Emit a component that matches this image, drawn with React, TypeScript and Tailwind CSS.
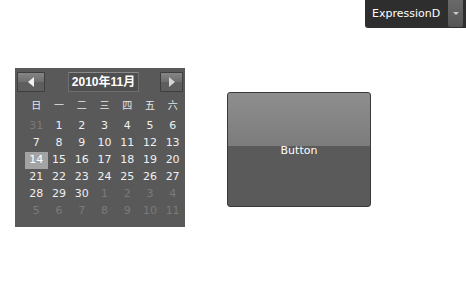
const prevDays = [31];
const nextDays = [1, 2, 3, 4, 5, 6, 7, 8, 9, 10, 11];

type Cell = { n: number; muted: boolean };

function buildCells(): Cell[] {
  const cells: Cell[] = prevDays.map((n) => ({ n, muted: true }));
  for (let i = 1; i <= 30; i++) cells.push({ n: i, muted: false });
  nextDays.forEach((n) => cells.push({ n, muted: true }));
  return cells;
}

const dayNames = ["日", "一", "二", "三", "四", "五", "六"];

function Calendar() {
  const cells = buildCells();
  return (
    <div className="mt-[68px] ml-[15px] h-[159px] w-[170px] bg-[#595959] font-['DejaVu_Sans','Noto_Sans_CJK_SC',sans-serif]">
      <div className="flex items-center px-[2px] pt-[4px]">
        <button className="flex h-[20px] w-[28px] items-center justify-center rounded-[1px] border border-[#3e3e3e] bg-[linear-gradient(#858585,#6e6e6e_50%,#5e5e5e_50%,#5e5e5e)]">
          <svg width="6" height="10" viewBox="0 0 6 10" aria-hidden>
            <path d="M6 0v10L0 5z" fill="#f2f2f2" />
          </svg>
        </button>
        <div className="ml-[23px] flex h-[20px] w-[71px] items-center justify-center whitespace-nowrap rounded-[1px] border border-[#6f6f6f] border-t-[#8a8a8a] bg-[#4f4f4f] font-['Liberation_Sans','Noto_Sans_CJK_SC',sans-serif] text-[12px] font-bold text-white">
          2010年11月
        </div>
        <button className="ml-auto flex h-[20px] w-[23px] items-center justify-center rounded-[1px] border border-[#3e3e3e] bg-[linear-gradient(#858585,#6e6e6e_50%,#5e5e5e_50%,#5e5e5e)]">
          <svg width="6" height="10" viewBox="0 0 6 10" aria-hidden>
            <path d="M0 0v10L6 5z" fill="#d6d6d6" />
          </svg>
        </button>
      </div>
      <div className="mt-[5px] ml-[10px] grid w-[159px] grid-cols-7">
        {dayNames.map((d) => (
          <div key={d} className="flex h-[17px] items-center justify-center text-[10px] text-[#e6e6e6]">
            {d}
          </div>
        ))}
      </div>
      <div className="mt-[4px] ml-[10px] grid w-[159px] grid-cols-7">
        {cells.map((c, i) => (
          <div key={i} className="flex h-[17px] items-center justify-center">
            <span
              className={
                c.n === 14 && !c.muted
                  ? "flex h-[17px] w-[23px] items-center justify-center bg-[#a3a3a3] text-[11px] text-white"
                  : c.muted
                  ? "text-[11px] text-[#7a7a7a]"
                  : "text-[11px] text-[#f0f0f0]"
              }
            >
              {c.n}
            </span>
          </div>
        ))}
      </div>
    </div>
  );
}

export default function App() {
  return (
    <div className="relative h-[294px] w-[466px] overflow-hidden bg-white">
      <div className="absolute right-0 top-0 flex h-[28px] w-[101px] items-center rounded-bl-[3px] bg-[#2e2e2e] pl-[7px] pr-[3px] font-['DejaVu_Sans',sans-serif]">
        <div className="whitespace-nowrap text-[11px] text-white">ExpressionD</div>
        <div className="ml-auto flex h-[27px] w-[15px] items-center justify-center self-start rounded-b-[2px] bg-[linear-gradient(#6a6a6a,#555)]">
          <svg width="6" height="3" viewBox="0 0 6 3" aria-hidden>
            <path d="M0 0h6L3 3z" fill="#c8c8c8" />
          </svg>
        </div>
      </div>
      <div className="flex items-start">
        <Calendar />
        <button className="mt-[92px] ml-[42px] flex h-[115px] w-[144px] items-center justify-center rounded-[3px] border border-[#3a3a3a] bg-[linear-gradient(#8e8e8e,#7c7c7c_47%,#5a5a5a_47%,#5a5a5a)] pt-[3px] font-['DejaVu_Sans',sans-serif] text-[11px] text-white">
          Button
        </button>
      </div>
    </div>
  );
}
